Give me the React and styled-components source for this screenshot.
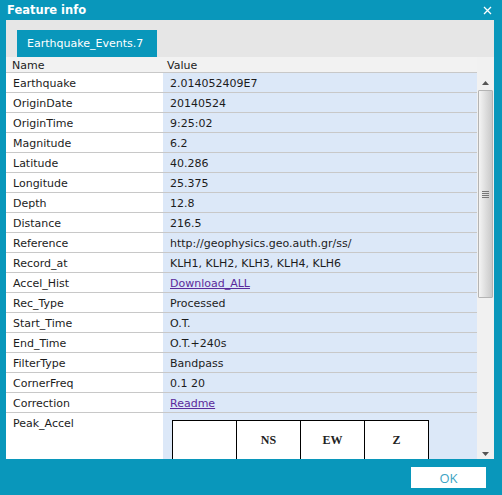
import React from 'react';
import styled, { createGlobalStyle } from 'styled-components';

const GlobalStyle = createGlobalStyle`
  html, body {
    margin: 0;
    padding: 0;
    background: #0997bb;
  }
`;

const Window = styled.div`
  width: 502px;
  height: 495px;
  background: #0997bb;
  display: flex;
  flex-direction: column;
  font-family: "DejaVu Sans", Verdana, sans-serif;
  font-size: 11px;
  color: #1c1c1c;
  overflow: hidden;
`;

const TitleBar = styled.div`
  height: 20px;
  display: flex;
  align-items: center;
  justify-content: space-between;
  padding: 0 10px 0 7px;
  color: #fff;
  font-weight: bold;
  font-size: 11.5px;
`;

const Panel = styled.div`
  margin: 0 8px 0 6px;
  height: 439px;
  background: #e6e6e6;
  display: flex;
  flex-direction: column;
`;

const TabStrip = styled.div`
  height: 37px;
  padding: 10px 0 0 11px;
  box-sizing: border-box;
  display: flex;
`;

const Tab = styled.div`
  width: 140px;
  height: 27px;
  background: #0997bb;
  color: #fff;
  display: flex;
  align-items: center;
  padding-left: 10px;
  box-sizing: border-box;
`;

const Grid = styled.div`
  flex: 1;
  display: flex;
  min-height: 0;
`;

const GridMain = styled.div`
  flex: 1;
  display: flex;
  flex-direction: column;
  background: #fff;
  min-width: 0;
`;

const HeaderRow = styled.div`
  height: 15px;
  display: flex;
  background: #f2f2f2;
  border-bottom: 1px solid #c8c8c8;
`;

const HeaderCell = styled.div`
  box-sizing: border-box;
  width: ${p => (p.$wide ? 'auto' : '157px')};
  flex: ${p => (p.$wide ? 1 : 'none')};
  padding-left: ${p => (p.$wide ? '4px' : '6px')};
  padding-top: 1px;
  line-height: 15px;
`;

const Body = styled.div`
  flex: 1;
  overflow: hidden;
`;

const Row = styled.div`
  display: flex;
  height: ${p => (p.$tall ? '60px' : '19px')};
  border-bottom: 1px solid #c8c8c8;
`;

const NameCell = styled.div`
  box-sizing: border-box;
  width: 157px;
  padding: 2px 0 0 7px;
  line-height: 18px;
  background: #fff;
`;

const ValueCell = styled.div`
  flex: 1;
  padding: 2px 0 0 7px;
  line-height: 18px;
  background: #dce8f8;
`;

const Link = styled.a`
  color: #5b2b9b;
  text-decoration: underline;
`;

const InnerTable = styled.table`
  border-collapse: collapse;
  margin: 5px 0 0 2px;
  background: #fff;
  font-family: "Liberation Serif", "Times New Roman", serif;
  font-size: 12px;
  font-weight: bold;
  color: #222;
`;

const InnerCell = styled.td`
  width: 63px;
  height: 38px;
  border: 1px solid #000;
  text-align: center;
  padding: 0;
`;

const ScrollColumn = styled.div`
  width: 17px;
  background: #f1f1f1;
  display: flex;
  flex-direction: column;
  align-items: center;
  padding-top: 20px;
  box-sizing: border-box;
`;

const Arrow = styled.div`
  height: 11px;
  width: 100%;
  display: flex;
  align-items: center;
  justify-content: center;
`;

const Track = styled.div`
  flex: 1;
  width: 100%;
  display: flex;
  flex-direction: column;
  padding: 2px 1px;
  box-sizing: border-box;
`;

const Thumb = styled.div`
  height: 206px;
  border: 1px solid #b4b4b4;
  border-radius: 1px;
  background: linear-gradient(to right, #f4f4f4, #dcdcdc 55%, #c9c9c9);
  display: flex;
  align-items: center;
  justify-content: center;
`;

const Footer = styled.div`
  height: 36px;
  display: flex;
  justify-content: flex-end;
  align-items: flex-start;
  padding: 8px 16px 0 0;
  box-sizing: border-box;
`;

const OkButton = styled.button`
  width: 75px;
  height: 21px;
  border: none;
  background: #fff;
  color: #3aa3c4;
  font-family: "Open Sans", "DejaVu Sans", sans-serif;
  font-size: 13px;
  padding: 0;
`;

const rows = [
  ['Earthquake', '2.014052409E7'],
  ['OriginDate', '20140524'],
  ['OriginTime', '9:25:02'],
  ['Magnitude', '6.2'],
  ['Latitude', '40.286'],
  ['Longitude', '25.375'],
  ['Depth', '12.8'],
  ['Distance', '216.5'],
  ['Reference', 'http://geophysics.geo.auth.gr/ss/'],
  ['Record_at', 'KLH1, KLH2, KLH3, KLH4, KLH6'],
  ['Accel_Hist', 'Download_ALL', true],
  ['Rec_Type', 'Processed'],
  ['Start_Time', 'O.T.'],
  ['End_Time', 'O.T.+240s'],
  ['FilterType', 'Bandpass'],
  ['CornerFreq', '0.1 20'],
  ['Correction', 'Readme', true],
];

const CloseIcon = () => (
  <svg width="9" height="9" viewBox="0 0 9 9">
    <path d="M1 1L8 8M8 1L1 8" stroke="#fff" strokeWidth="1.3" />
  </svg>
);

const App = () => {
  return (
    <Window>
      <GlobalStyle />
      <TitleBar>
        <span>Feature info</span>
        <CloseIcon />
      </TitleBar>
      <Panel>
        <TabStrip>
          <Tab>Earthquake_Events.7</Tab>
        </TabStrip>
        <Grid>
          <GridMain>
            <HeaderRow>
              <HeaderCell>Name</HeaderCell>
              <HeaderCell $wide>Value</HeaderCell>
            </HeaderRow>
            <Body>
              {rows.map(([name, value, link]) => (
                <Row key={name}>
                  <NameCell>{name}</NameCell>
                  <ValueCell>{link ? <Link href="#">{value}</Link> : value}</ValueCell>
                </Row>
              ))}
              <Row $tall>
                <NameCell>Peak_Accel</NameCell>
                <ValueCell>
                  <InnerTable>
                    <tbody>
                      <tr>
                        <InnerCell></InnerCell>
                        <InnerCell>NS</InnerCell>
                        <InnerCell>EW</InnerCell>
                        <InnerCell>Z</InnerCell>
                      </tr>
                    </tbody>
                  </InnerTable>
                </ValueCell>
              </Row>
            </Body>
          </GridMain>
          <ScrollColumn>
            <Arrow>
              <svg width="7" height="4" viewBox="0 0 7 4"><path d="M0 4L3.5 0L7 4Z" fill="#555" /></svg>
            </Arrow>
            <Track>
              <Thumb>
                <svg width="7" height="7" viewBox="0 0 7 7">
                  <path d="M0 0.5H7M0 2.5H7M0 4.5H7M0 6.5H7" stroke="#777" strokeWidth="1" />
                </svg>
              </Thumb>
              <div style={{ flex: 1 }} />
            </Track>
            <Arrow>
              <svg width="7" height="4" viewBox="0 0 7 4"><path d="M0 0L3.5 4L7 0Z" fill="#555" /></svg>
            </Arrow>
          </ScrollColumn>
        </Grid>
      </Panel>
      <Footer>
        <OkButton>OK</OkButton>
      </Footer>
    </Window>
  );
};

export default App;
